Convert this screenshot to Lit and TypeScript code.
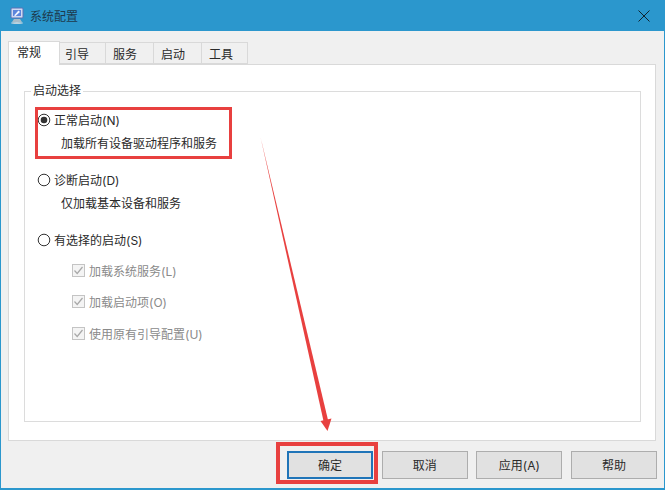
import { LitElement, html, css, svg } from "lit";
import { customElement } from "lit/decorators.js";

@customElement("app-root")
export class AppRoot extends LitElement {
  static styles = css`
    :host { display: block; width: 665px; height: 490px; position: relative; overflow: hidden;
      font-family: Inter, "Noto Sans CJK SC", sans-serif; font-size: 12px; color: #2a2a2a; }
    .window { box-sizing: border-box; width: 665px; height: 490px; display: flex; flex-direction: column;
      background: #f0f0f0; border: solid #2b97cd; border-width: 0 1px 2px 1px; }
    .title { height: 31px; flex: none; margin: 0 -1px; background: #2b97cd; display: flex; align-items: center; padding: 0 15px 0 9px; gap: 5px; color: #1d3a4c; }
    .title .spacer { flex: 1; }
    .body { flex: 1; display: flex; flex-direction: column; padding: 10px 8px 0 7px; min-height: 0; }
    .tabs { display: flex; height: 23px; align-items: flex-end; flex: none; position: relative; z-index: 1; }
    .tab { box-sizing: border-box; height: 22px; border: 1px solid #d9d9d9; border-left: 0; background: #f0f0f0; display: flex; align-items: center; padding: 0 0 0 7px; }
    .tab.first { padding-left: 5px; }
    .tab.active { height: 24px; background: #fff; border-left: 1px solid #d9d9d9; border-bottom: 0; margin-bottom: -1px; padding: 0 0 4px 8px; }
    .panel { box-sizing: border-box; height: 377px; background: #fff; border: 1px solid #d9d9d9; padding: 26px 14px 0 15px; flex: none; }
    .group { box-sizing: border-box; height: 331px; border: 1px solid #dcdcdc; position: relative; padding: 16px 0 0 12px; }
    .legend { position: absolute; left: 6px; top: -9px; background: #fff; padding: 0 2px; line-height: 16px; }
    .opt { display: flex; align-items: center; gap: 3px; height: 24px; line-height: 24px; }
    .opt span { padding-top: 2px; }
    .sub { padding: 1px 0 0 24px; height: 21px; line-height: 22px; margin-bottom: 14px; }
    .checks { padding-left: 35px; display: flex; flex-direction: column; gap: 7.5px; margin-top: 6px; }
    .check { display: flex; align-items: center; gap: 4px; height: 24px; color: #8a8a8a; }
    .footer { flex: 1; display: flex; justify-content: flex-end; align-items: flex-start; padding-top: 10px; gap: 8.67px; margin-right: -1px; }
    .btn { box-sizing: border-box; width: 86px; height: 28px; background: #e1e1e1; border: 1px solid #adadad; display: flex; align-items: center; justify-content: center; padding-bottom: 2px; }
    .btn.default { border: 2px solid #1f74b8; }
    .mark { position: absolute; box-sizing: border-box; border: 3px solid #e8403f; pointer-events: none; }
    .mark.one { left: 35px; top: 107px; width: 197px; height: 52px; }
    .mark.two { left: 276px; top: 442px; width: 102px; height: 42px; border-width: 4px; }
    .arrow { position: absolute; left: 0; top: 0; pointer-events: none; }
  `;

  radio(on: boolean) {
    return html`<svg width="14" height="14" viewBox="0 0 14 14">
      <circle cx="7" cy="7" r="5.8" fill="#fff" stroke="#333" stroke-width="1"></circle>
      ${on ? svg`<circle cx="7" cy="7" r="3.3" fill="#333"></circle>` : ""}
    </svg>`;
  }

  check() {
    return html`<svg width="13" height="13" viewBox="0 0 13 13">
      <rect x=".5" y=".5" width="12" height="12" fill="#f4f4f4" stroke="#c4c4c4"></rect>
      <path d="M2.5 6.5 5.2 9.5 10.5 3" fill="none" stroke="#a8a8a8" stroke-width="1.2"></path>
    </svg>`;
  }

  render() {
    return html`
      <div class="window">
        <div class="title">
          <svg width="16" height="18" viewBox="0 0 16 18">
            <rect x="2" y="1" width="12" height="10" rx="1" fill="#cfd9f2" stroke="#5a70b4"></rect>
            <rect x="4" y="3" width="8" height="6" fill="#5c85dc"></rect>
            <path d="M5 8.5 9.5 3.5 11 5 6.5 9z" fill="#f2f6ff"></path>
            <path d="M5 12h6l2 3H3z" fill="#a8bcc8"></path>
            <ellipse cx="8" cy="16" rx="6" ry="1" fill="#bcd2de"></ellipse>
          </svg>
          <span>系统配置</span>
          <span class="spacer"></span>
          <svg width="12" height="12" viewBox="0 0 12 12"><path d="M.5.5l11 11M11.5.5l-11 11" stroke="#10242f" stroke-width="1"></path></svg>
        </div>
        <div class="body">
          <div class="tabs">
            <div class="tab active" style="width:52px">常规</div>
            <div class="tab first" style="width:46px">引导</div>
            <div class="tab" style="width:48px">服务</div>
            <div class="tab" style="width:48px">启动</div>
            <div class="tab" style="width:46px">工具</div>
          </div>
          <div class="panel">
            <div class="group">
              <div class="legend">启动选择</div>
              <div class="opt">${this.radio(true)}<span>正常启动(N)</span></div>
              <div class="sub">加载所有设备驱动程序和服务</div>
              <div class="opt">${this.radio(false)}<span>诊断启动(D)</span></div>
              <div class="sub">仅加载基本设备和服务</div>
              <div class="opt">${this.radio(false)}<span>有选择的启动(S)</span></div>
              <div class="checks">
                <div class="check">${this.check()}<span>加载系统服务(L)</span></div>
                <div class="check">${this.check()}<span>加载启动项(O)</span></div>
                <div class="check">${this.check()}<span>使用原有引导配置(U)</span></div>
              </div>
            </div>
          </div>
          <div class="footer">
            <div class="btn default">确定</div>
            <div class="btn">取消</div>
            <div class="btn">应用(A)</div>
            <div class="btn">帮助</div>
          </div>
        </div>
      </div>
      <div class="mark one"></div>
      <div class="mark two"></div>
      <svg class="arrow" width="665" height="490" viewBox="0 0 665 490">
        <path d="M260.5 137 L323.5 421 L328 420 Z" fill="#e8403f"></path>
        <path d="M320.5 421 L331.5 418.5 L327.5 431 Z" fill="#e8403f"></path>
      </svg>
    `;
  }
}
